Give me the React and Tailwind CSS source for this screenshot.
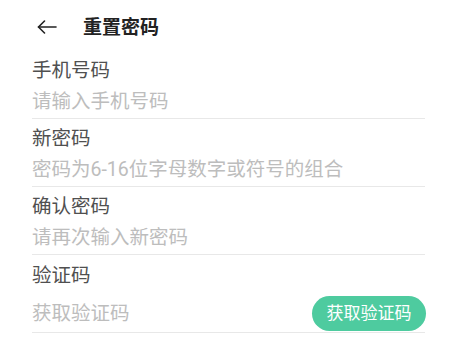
import React from 'react';

const fields = [
  { label: '手机号码', placeholder: '请输入手机号码', type: 'tel' },
  { label: '新密码', placeholder: '密码为6-16位字母数字或符号的组合', type: 'password' },
  { label: '确认密码', placeholder: '请再次输入新密码', type: 'password' },
];

function BackArrow() {
  return (
    <svg width="20" height="14" viewBox="0 0 20 14" fill="none" stroke="#222" strokeWidth="1.6" strokeLinecap="round" strokeLinejoin="round">
      <path d="M19 7H1.5" />
      <path d="M7.5 1L1.5 7l6 6" />
    </svg>
  );
}

export default function App() {
  return (
    <div
      className="w-[454px] h-[348px] bg-white overflow-hidden"
      style={{ fontFamily: 'Roboto, "Noto Sans CJK SC", sans-serif' }}
    >
      {/* 顶部栏 */}
      <div className="h-[51px] pt-[3px] pl-[37px] flex items-center">
        <BackArrow />
        <span className="ml-[26px] text-[19px] font-bold text-[#222] leading-none">重置密码</span>
      </div>

      <div className="pl-8 pr-[29px]">
        {fields.map((f) => (
          <div key={f.label} className="pt-[6px] pb-[2px] border-b border-[#e8e8e8]">
            <div className="text-[19.5px] leading-[28px] text-[#505050]">{f.label}</div>
            <input
              type="text"
              placeholder={f.placeholder}
              className="mt-[3px] w-full block text-[19.5px] leading-[28px] h-[28px] outline-none bg-transparent placeholder:text-[#bdbdbd] text-[#333]"
            />
          </div>
        ))}

        <div className="pt-[7px] pb-[1px] border-b border-[#e8e8e8]">
          <div className="text-[19.5px] leading-[28px] text-[#505050]">验证码</div>
          <div className="pt-[6px] flex items-center justify-between">
            <input
              type="text"
              placeholder="获取验证码"
              className="flex-1 min-w-0 text-[19.5px] leading-[28px] h-[28px] outline-none bg-transparent placeholder:text-[#bdbdbd] text-[#333]"
            />
            <button className="h-[35px] w-[114px] -mr-[1px] rounded-full bg-[#4ecb9f] text-white text-[17px] leading-none">
              获取验证码
            </button>
          </div>
        </div>
      </div>
    </div>
  );
}
